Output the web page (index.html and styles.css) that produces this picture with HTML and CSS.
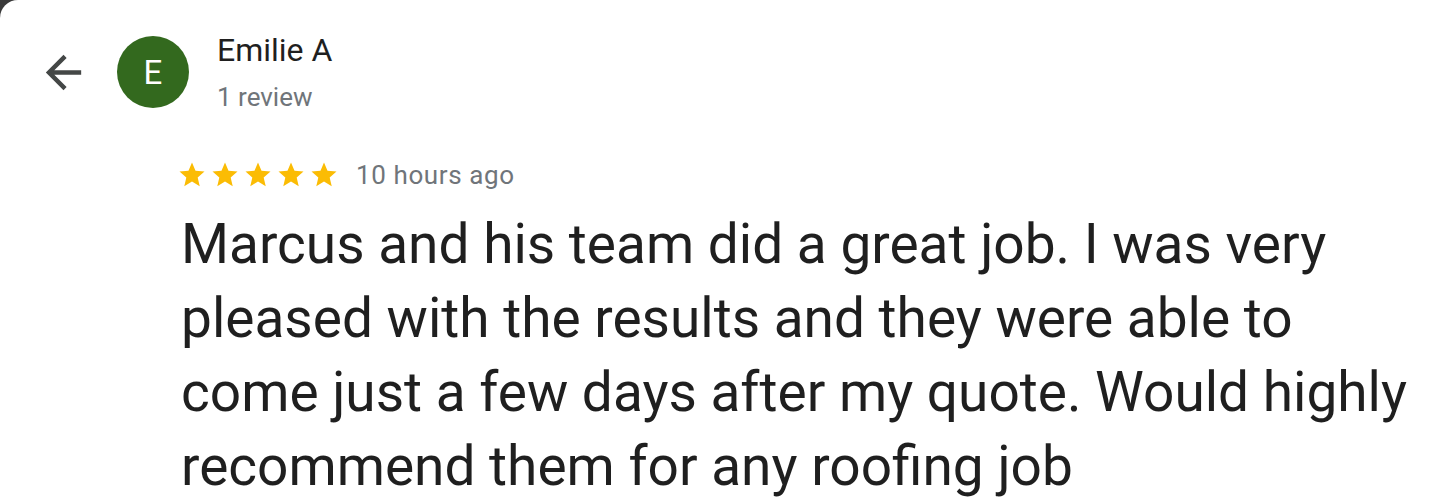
FILE: index.html
```html
<!DOCTYPE html>
<html lang="en">
<head>
    <meta charset="UTF-8">
    <meta name="viewport" content="width=device-width, initial-scale=1.0">
    <title>Review</title>
    <link rel="stylesheet" href="styles.css">
</head>
<body>
    <div class="card">
        <div class="header">
            <svg class="back" viewBox="0 0 24 24"><path d="M20 11H7.83l5.59-5.59L12 4l-8 8 8 8 1.41-1.41L7.83 13H20v-2z"/></svg>
            <div class="avatar">E</div>
            <div class="author">
                <div class="name">Emilie A</div>
                <div class="count">1 review</div>
            </div>
        </div>

        <div class="review">
            <div class="meta">
                <div class="stars">
                    <svg viewBox="0 0 24 24"><path d="M12 17.27L18.18 21l-1.64-7.03L22 9.24l-7.19-.61L12 2 9.19 8.63 2 9.24l5.46 4.73L5.82 21z"/></svg>
                    <svg viewBox="0 0 24 24"><path d="M12 17.27L18.18 21l-1.64-7.03L22 9.24l-7.19-.61L12 2 9.19 8.63 2 9.24l5.46 4.73L5.82 21z"/></svg>
                    <svg viewBox="0 0 24 24"><path d="M12 17.27L18.18 21l-1.64-7.03L22 9.24l-7.19-.61L12 2 9.19 8.63 2 9.24l5.46 4.73L5.82 21z"/></svg>
                    <svg viewBox="0 0 24 24"><path d="M12 17.27L18.18 21l-1.64-7.03L22 9.24l-7.19-.61L12 2 9.19 8.63 2 9.24l5.46 4.73L5.82 21z"/></svg>
                    <svg viewBox="0 0 24 24"><path d="M12 17.27L18.18 21l-1.64-7.03L22 9.24l-7.19-.61L12 2 9.19 8.63 2 9.24l5.46 4.73L5.82 21z"/></svg>
                </div>
                <span class="time">10 hours ago</span>
            </div>
            <p class="text">Marcus and his team did a great job. I was very pleased with the results and they were able to come just a few days after my quote. Would highly recommend them for any roofing job</p>
        </div>
    </div>
</body>
</html>
```

FILE: styles.css
```css
* {
    font-family: Roboto, "Liberation Sans", sans-serif;
    box-sizing: border-box;
}
html, body {
    margin: 0;
    height: 100%;
    overflow: hidden;
}
body {
    background: #3a3a3a;
}
.card {
    background: #fff;
    border-top-left-radius: 18px;
    height: 100%;
}
.header {
    display: flex;
    align-items: flex-start;
    padding: 36px 0 0 37px;
}
.back {
    width: 53px;
    height: 53px;
    margin-top: 10px;
    fill: #444746;
}
.avatar {
    width: 72px;
    height: 72px;
    margin-left: 27px;
    border-radius: 50%;
    background: #33691e;
    color: #fff;
    font-size: 33px;
    display: flex;
    align-items: center;
    justify-content: center;
}
.author {
    margin-left: 28px;
    margin-top: -7px;
}
.name {
    font-size: 32px;
    color: #1f1f1f;
    line-height: 42px;
}
.count {
    font-size: 26px;
    color: #70757a;
    line-height: 52px;
}
.review {
    padding: 37px 0 0 177px;
}
.meta {
    display: flex;
    align-items: center;
}
.stars {
    display: flex;
    gap: 3px;
}
.stars svg {
    width: 30px;
    height: 30px;
    fill: #fbbc04;
}
.time {
    margin-left: 17px;
    font-size: 26px;
    letter-spacing: 0.6px;
    color: #70757a;
}
.text {
    margin: 17px 0 0 4px;
    max-width: 1240px;
    font-size: 55px;
    line-height: 74px;
    color: #1f1f1f;
}
```
